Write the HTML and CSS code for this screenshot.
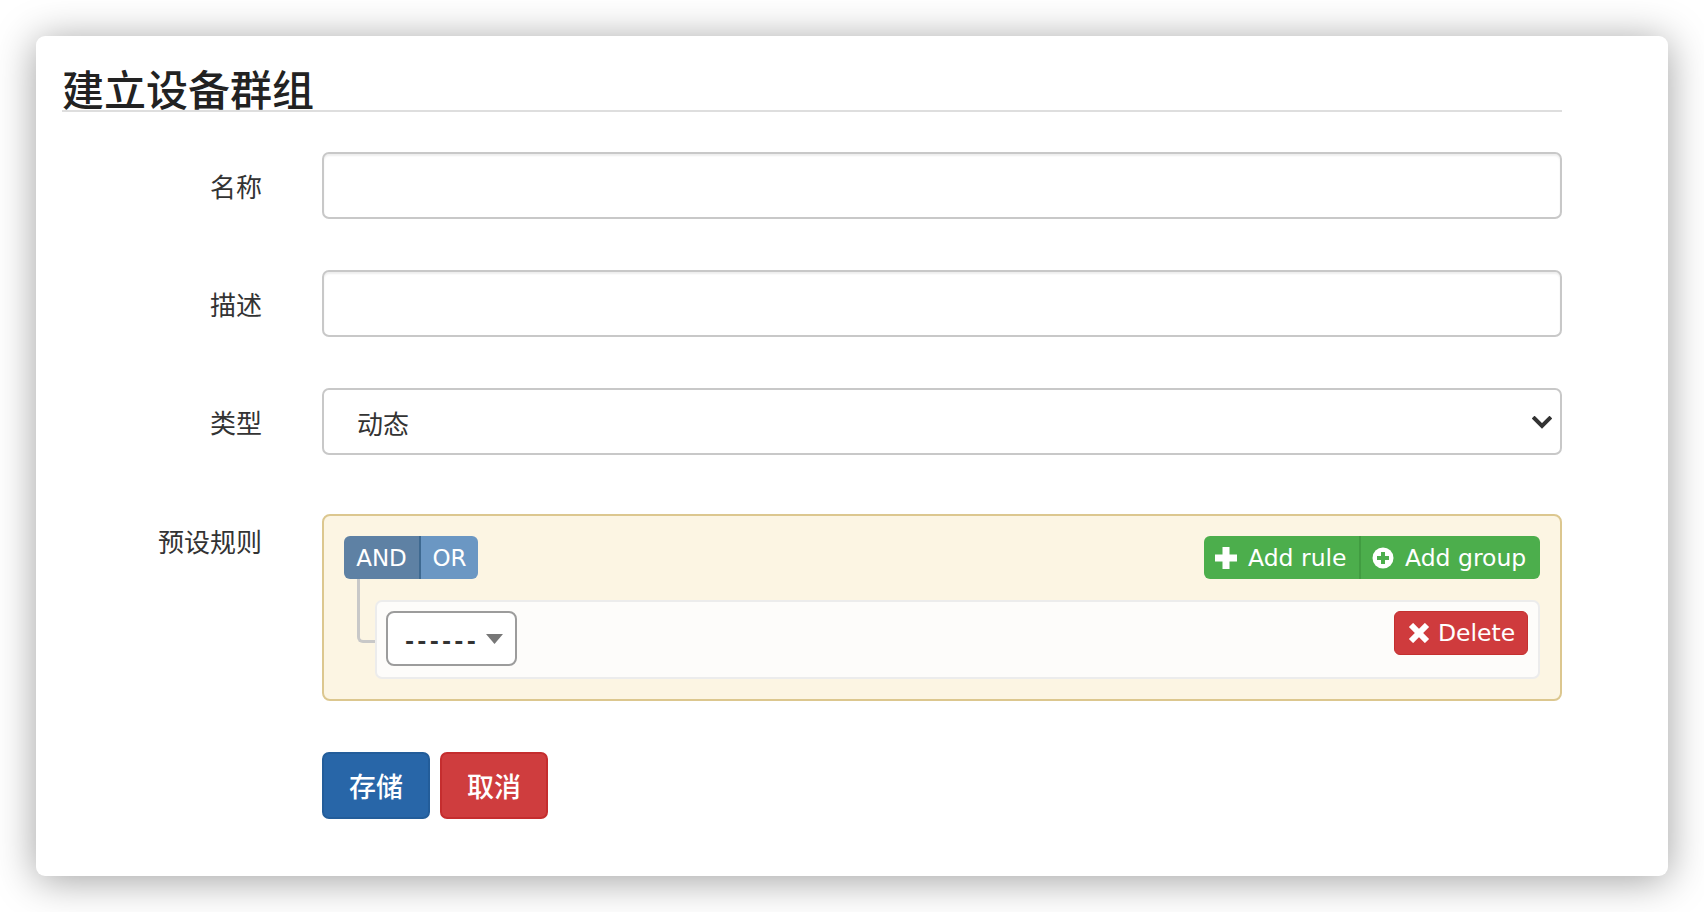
FILE: index.html
```html
<!DOCTYPE html>
<html lang="zh">
<head>
<meta charset="utf-8">
<title>建立设备群组</title>
<link rel="stylesheet" href="styles.css">
</head>
<body>
<div class="card">
  <h1 class="title">建立设备群组</h1>
  <form class="form">
    <div class="row">
      <label class="lbl">名称</label>
      <div class="ctl"><input class="input" type="text"></div>
    </div>
    <div class="row">
      <label class="lbl">描述</label>
      <div class="ctl"><input class="input" type="text"></div>
    </div>
    <div class="row">
      <label class="lbl">类型</label>
      <div class="ctl">
        <div class="input select">
          <span class="select-text">动态</span>
          <svg class="chev" width="20" height="13" viewBox="0 0 20 13"><path d="M2.5 2.5 L10 10 L17.5 2.5" fill="none" stroke="#333" stroke-width="4" stroke-linecap="square"/></svg>
        </div>
      </div>
    </div>
    <div class="row qbrow">
      <label class="lbl lbl-top">预设规则</label>
      <div class="ctl">
        <div class="qb">
          <div class="qb-head">
            <div class="bgroup">
              <span class="cond cond-and">AND</span><span class="cond cond-or">OR</span>
            </div>
            <div class="bgroup green">
              <span class="gbtn gbtn-rule">
                <svg width="22" height="22" viewBox="0 0 22 22"><rect x="7.5" y="0" width="7" height="22" fill="#fff"/><rect x="0" y="7.5" width="22" height="7" fill="#fff"/></svg>
                Add rule
              </span><span class="gbtn gbtn-group">
                <svg width="22" height="22" viewBox="0 0 22 22"><circle cx="11" cy="11" r="10.5" fill="#fff"/><rect x="9" y="5" width="4" height="12" fill="#4cae4c"/><rect x="5" y="9" width="12" height="4" fill="#4cae4c"/></svg>
                Add group
              </span>
            </div>
          </div>
          <div class="rules">
            <div class="rule">
              <div class="field">
                <span class="dashes">------</span>
                <svg width="17" height="10" viewBox="0 0 17 10"><path d="M0 0 H17 L8.5 10 Z" fill="#777"/></svg>
              </div>
              <span class="del">
                <svg width="22" height="20" viewBox="0 0 22 20"><path d="M3 2 L19 18 M19 2 L3 18" stroke="#fff" stroke-width="6" stroke-linecap="butt"/></svg>
                Delete
              </span>
            </div>
          </div>
        </div>
      </div>
    </div>
    <div class="row">
      <div></div>
      <div class="ctl actions">
        <button type="button" class="btn btn-save">存储</button>
        <button type="button" class="btn btn-cancel">取消</button>
      </div>
    </div>
  </form>
</div>
</body>
</html>
```

FILE: styles.css
```css
html, body {
  margin: 0;
  padding: 0;
  background: #ffffff;
}
body {
  padding: 36px;
  font-family: "DejaVu Sans", "Noto Sans CJK SC", sans-serif;
  color: #333;
}
.card {
  box-sizing: border-box;
  width: 1632px;
  height: 840px;
  background: #fff;
  border-radius: 9px;
  box-shadow: 0 4px 40px rgba(0, 0, 0, 0.38);
  padding: 29px 0 0 26px;
}
.title {
  width: 1500px;
  margin: 0;
  font-family: "Noto Sans CJK SC", sans-serif;
  font-size: 42px;
  line-height: 45px;
  font-weight: 500;
  color: #222;
  border-bottom: 2px solid #dedede;
}
.form {
  width: 1500px;
  margin-top: 40px;
  display: flex;
  flex-direction: column;
  gap: 51px;
}
.row {
  display: grid;
  grid-template-columns: 200px 1240px;
  column-gap: 60px;
}
.qbrow {
  margin-top: 8px;
}
.lbl {
  font-family: "Noto Sans CJK SC", sans-serif;
  font-size: 26px;
  line-height: 67px;
  text-align: right;
  color: #333;
}
.lbl-top {
  line-height: 53px;
}
.input {
  box-sizing: border-box;
  display: block;
  width: 100%;
  height: 67px;
  margin: 0;
  border: 2px solid #c8c8c8;
  border-radius: 7px;
  background: #fff;
  box-shadow: inset 0 2px 2px rgba(0, 0, 0, 0.07);
  outline: none;
}
.select {
  display: flex;
  align-items: center;
  justify-content: space-between;
  padding: 0 8px 0 33px;
  box-shadow: none;
}
.select-text {
  font-family: "Noto Sans CJK SC", sans-serif;
  font-size: 26px;
  color: #333;
  padding-top: 2px;
}
.chev {
  display: block;
  margin-top: 1px;
}
.qb {
  box-sizing: border-box;
  border: 2px solid #dcc78f;
  background: #fcf5e3;
  border-radius: 8px;
  padding: 20px;
  height: 187px;
}
.qb-head {
  display: flex;
  justify-content: space-between;
  height: 43px;
}
.bgroup {
  display: flex;
  border-radius: 6px;
  overflow: hidden;
  height: 43px;
}
.cond {
  display: flex;
  align-items: center;
  justify-content: center;
  color: #fff;
  font-size: 23px;
  height: 43px;
}
.cond-and {
  width: 75px;
  background: #5e81a4;
}
.cond-or {
  width: 57px;
  background: #6b97c3;
  border-left: 2px solid #3e6990;
}
.green {
  background: #4cae4c;
}
.gbtn {
  display: flex;
  align-items: center;
  gap: 11px;
  color: #fff;
  font-size: 23.5px;
  height: 43px;
  box-sizing: border-box;
}
.gbtn svg {
  display: block;
}
.gbtn-rule {
  width: 155px;
  padding-left: 11px;
}
.gbtn-group {
  width: 181px;
  padding-left: 11px;
  border-left: 2px solid #419c41;
}
.rules {
  margin-top: 21px;
  margin-left: 31px;
}
.rule {
  position: relative;
  box-sizing: border-box;
  height: 79px;
  border: 2px solid #ececec;
  border-radius: 7px;
  background: #fdfcfa;
  padding: 9px 10px 9px 9px;
  display: flex;
  justify-content: space-between;
  align-items: flex-start;
}
.rule::before {
  content: "";
  position: absolute;
  left: -20px;
  top: -23px;
  width: 15px;
  height: 61px;
  border-left: 3px solid #c8c8c8;
  border-bottom: 3px solid #c8c8c8;
  border-bottom-left-radius: 6px;
}
.field {
  box-sizing: border-box;
  width: 131px;
  height: 55px;
  border: 2px solid #9c9c9c;
  border-radius: 8px;
  background: #fff;
  display: flex;
  align-items: center;
  justify-content: space-between;
  padding: 0 12px 0 17px;
}
.dashes {
  font-size: 22px;
  font-weight: bold;
  letter-spacing: 3.2px;
  color: #333;
  margin-top: 5px;
}
.del {
  box-sizing: border-box;
  height: 44px;
  width: 134px;
  display: flex;
  align-items: center;
  gap: 8px;
  padding-left: 13px;
  background: #cf3b3d;
  border: 1px solid #c4302f;
  border-radius: 6px;
  color: #fff;
  font-size: 23.5px;
}
.del svg {
  display: block;
}
.actions {
  display: flex;
  gap: 10px;
}
.btn {
  box-sizing: border-box;
  width: 108px;
  height: 67px;
  border-radius: 7px;
  border: 2px solid transparent;
  color: #fff;
  font-family: "Noto Sans CJK SC", sans-serif;
  font-size: 27px;
  font-weight: 500;
  padding: 0;
  cursor: pointer;
}
.btn-save {
  background: #2866a8;
  border-color: #235d9a;
}
.btn-cancel {
  background: #cf3d3e;
  border-color: #c52d2e;
}
```
